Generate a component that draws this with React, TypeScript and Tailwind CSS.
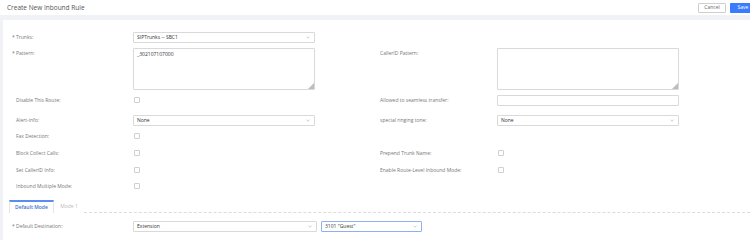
import React from 'react';

const font = { fontFamily: '"Open Sans", "Liberation Sans", sans-serif' };

function Label({ text, required }: { text: string; required?: boolean }) {
  return (
    <div className="relative w-[130px] shrink-0 pl-[13px] text-[5px] leading-[11px] text-[#777]">
      {required && <span className="absolute left-[9px] top-0 text-[#777]">*</span>}
      {text}
    </div>
  );
}

function Select({ value, w = 'w-[182px]', focus }: { value: string; w?: string; focus?: boolean }) {
  return (
    <div
      className={`flex h-[11px] ${w} items-center justify-between rounded-[1px] border bg-white px-[3px] text-[5px] text-[#333] ${
        focus ? 'border-[#8fb0f0]' : 'border-[#d9d9d9]'
      }`}
    >
      <span>{value}</span>
      <svg width="4" height="3" viewBox="0 0 4 3" className="mr-[1px]">
        <path d="M0.5 0.8 L2 2.2 L3.5 0.8" fill="none" stroke="#aaa" strokeWidth="0.6" />
      </svg>
    </div>
  );
}

function TextArea({ value }: { value?: string }) {
  return (
    <div className="relative h-[42px] w-[182px] rounded-[1px] border border-[#d9d9d9] bg-white px-[3px] pt-[2px] text-[5px] text-[#333]">
      {value}
      <svg width="6" height="6" viewBox="0 0 6 6" className="absolute bottom-0 right-0">
        <path d="M6 0 L6 6 L0 6 Z" fill="#bdbdbd" />
      </svg>
    </div>
  );
}

function Check() {
  return <div className="ml-[1px] h-[6px] w-[6px] rounded-[1px] border border-[#cfcfcf] bg-white" />;
}

function Input() {
  return <div className="h-[11px] w-[182px] rounded-[1px] border border-[#d9d9d9] bg-white" />;
}

function Row({ children, mt }: { children: React.ReactNode; mt: string }) {
  return <div className={`flex ${mt}`}>{children}</div>;
}

function Half({ children }: { children: React.ReactNode }) {
  return <div className="flex w-[364px] shrink-0 items-start">{children}</div>;
}

function CheckCell() {
  return (
    <div className="pt-[2px]">
      <Check />
    </div>
  );
}

export default function App() {
  return (
    <div className="h-[240px] w-[750px] overflow-hidden bg-[#f0f2f5]" style={font}>
      {/* Header */}
      <div className="flex h-[15px] items-center justify-between bg-white pl-[7px]">
        <span className="text-[6.5px] text-[#555]">Create New Inbound Rule</span>
        <div className="flex items-center gap-[4px]">
          <div className="flex h-[10px] w-[28px] items-center justify-center rounded-[1px] border border-[#cfcfcf] bg-white text-[5px] text-[#666]">
            Cancel
          </div>
          <div className="flex h-[10px] w-[20px] items-center justify-center rounded-l-[1px] bg-[#3b7cff] pl-[6px] text-[5px] text-white">
            Save
          </div>
        </div>
      </div>

      {/* Panel */}
      <div className="ml-[3px] mt-[5px] h-[220px] bg-white pt-[12px]">
        <Row mt="mt-0">
          <Half>
            <Label text="Trunks:" required />
            <Select value="SIPTrunks -- SBC1" />
          </Half>
        </Row>
        <Row mt="mt-[5px]">
          <Half>
            <Label text="Pattern:" required />
            <TextArea value="_302107107000" />
          </Half>
          <Half>
            <Label text="CallerID Pattern:" />
            <TextArea />
          </Half>
        </Row>
        <Row mt="mt-[5px]">
          <Half>
            <Label text="Disable This Route:" />
            <CheckCell />
          </Half>
          <Half>
            <Label text="Allowed to seamless transfer:" />
            <Input />
          </Half>
        </Row>
        <Row mt="mt-[9px]">
          <Half>
            <Label text="Alert-info:" />
            <Select value="None" />
          </Half>
          <Half>
            <Label text="special ringing tone:" />
            <Select value="None" />
          </Half>
        </Row>
        <Row mt="mt-[5px]">
          <Half>
            <Label text="Fax Detection:" />
            <CheckCell />
          </Half>
        </Row>
        <Row mt="mt-[6px]">
          <Half>
            <Label text="Block Collect Calls:" />
            <CheckCell />
          </Half>
          <Half>
            <Label text="Prepend Trunk Name:" />
            <CheckCell />
          </Half>
        </Row>
        <Row mt="mt-[6px]">
          <Half>
            <Label text="Set CallerID Info:" />
            <CheckCell />
          </Half>
          <Half>
            <Label text="Enable Route-Level Inbound Mode:" />
            <CheckCell />
          </Half>
        </Row>
        <Row mt="mt-[5px]">
          <Half>
            <Label text="Inbound Multiple Mode:" />
            <CheckCell />
          </Half>
        </Row>

        {/* Tabs */}
        <div className="mt-[8px] flex items-end pl-[6px]">
          <div className="flex h-[13px] w-[45px] items-center justify-center border-x border-t-2 border-x-[#e4e4e4] border-t-[#5b8def] bg-white text-[5px] font-semibold text-[#3f6fd0]">
            Default Mode
          </div>
          <div className="flex h-[12px] w-[30px] items-center justify-center text-[5px] text-[#bbb]">
            Mode 1
          </div>
          <div className="h-[12px] flex-1 border-b border-dashed border-[#dcdcdc]" />
        </div>

        <div className="mt-[8px] flex items-start">
          <Label text="Default Destination:" required />
          <Select value="Extension" w="w-[184px]" />
          <div className="ml-[4px]">
            <Select value='3101 "Guest"' w="w-[101px]" focus />
          </div>
        </div>
      </div>
    </div>
  );
}
